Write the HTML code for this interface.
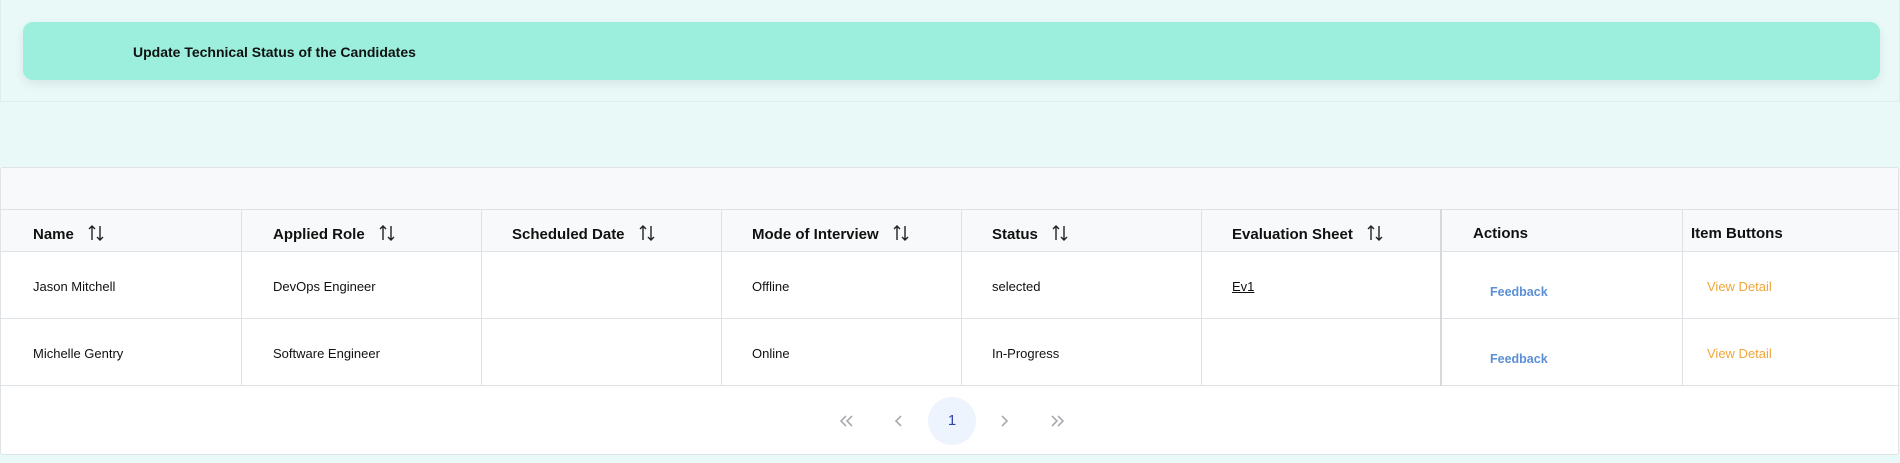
<!DOCTYPE html>
<html><head><style>
*{margin:0;padding:0;box-sizing:border-box}
body{width:1900px;height:463px;background:#e8f9f8;font-family:"Liberation Sans",sans-serif;position:relative;overflow:hidden;color:#111}
.top{position:absolute;left:0;top:0;width:1900px;height:102px;border:1px solid #dcefee;border-top:none;background:#e8f9f8}
.banner{position:absolute;left:22px;top:22px;width:1857px;height:58px;background:#9befdc;border-radius:10px;box-shadow:0 4px 10px rgba(0,0,0,.08)}
.banner span{position:absolute;left:110px;top:22px;font-size:14px;font-weight:bold;color:#111}
.card{position:absolute;left:0;top:167px;width:1899px;height:288px;background:#fff;border:1px solid #dde3e6;border-radius:3px}
.bar{position:absolute;left:0;top:0;width:100%;height:41px;background:#f8f9fa}
.t{position:absolute;font-size:13px;white-space:nowrap}
.h{position:absolute;top:41px;height:43px;background:#f8f9fa;border-top:1px solid #dee2e6;border-bottom:1px solid #dee2e6}
.v{position:absolute;width:1px;background:#dee2e6;top:41px;height:177px}
.hl{position:absolute;left:0;width:100%;height:1px;background:#dee2e6}
.th{position:absolute;top:57px;font-size:15px;font-weight:bold;white-space:nowrap}
.ic{display:inline-block;vertical-align:-2px;margin-left:14px}
</style></head><body>
<div class="top"><div class="banner"><span>Update Technical Status of the Candidates</span></div></div>
<div class="card">
<div class="bar"></div>
<div class="h" style="left:0;width:100%"></div>
<div class="hl" style="top:150px"></div>
<div class="hl" style="top:217px"></div>
<div class="v" style="left:240px"></div>
<div class="v" style="left:480px"></div>
<div class="v" style="left:720px"></div>
<div class="v" style="left:960px"></div>
<div class="v" style="left:1200px"></div>
<div class="v" style="left:1439px;width:2px;background:#d6d9dc"></div>
<div class="v" style="left:1681px"></div>
<div class="th" style="left:32px">Name<svg class="ic" width="16" height="16" viewBox="0 0 16 16" fill="none" stroke="#222" stroke-width="1.4"><path d="M4 15V1M1 4l3-3 3 3M12 1v14M9 12l3 3 3-3"/></svg></div>
<div class="th" style="left:272px">Applied Role<svg class="ic" width="16" height="16" viewBox="0 0 16 16" fill="none" stroke="#222" stroke-width="1.4"><path d="M4 15V1M1 4l3-3 3 3M12 1v14M9 12l3 3 3-3"/></svg></div>
<div class="th" style="left:511px">Scheduled Date<svg class="ic" width="16" height="16" viewBox="0 0 16 16" fill="none" stroke="#222" stroke-width="1.4"><path d="M4 15V1M1 4l3-3 3 3M12 1v14M9 12l3 3 3-3"/></svg></div>
<div class="th" style="left:751px">Mode of Interview<svg class="ic" width="16" height="16" viewBox="0 0 16 16" fill="none" stroke="#222" stroke-width="1.4"><path d="M4 15V1M1 4l3-3 3 3M12 1v14M9 12l3 3 3-3"/></svg></div>
<div class="th" style="left:991px">Status<svg class="ic" width="16" height="16" viewBox="0 0 16 16" fill="none" stroke="#222" stroke-width="1.4"><path d="M4 15V1M1 4l3-3 3 3M12 1v14M9 12l3 3 3-3"/></svg></div>
<div class="th" style="left:1231px">Evaluation Sheet<svg class="ic" width="16" height="16" viewBox="0 0 16 16" fill="none" stroke="#222" stroke-width="1.4"><path d="M4 15V1M1 4l3-3 3 3M12 1v14M9 12l3 3 3-3"/></svg></div>
<div class="th" style="left:1472px">Actions</div>
<div class="th" style="left:1690px">Item Buttons</div>

<div class="t" style="left:32px;top:111px">Jason Mitchell</div>
<div class="t" style="left:272px;top:111px">DevOps Engineer</div>
<div class="t" style="left:751px;top:111px">Offline</div>
<div class="t" style="left:991px;top:111px">selected</div>
<div class="t" style="left:1231px;top:111px;text-decoration:underline">Ev1</div>
<div class="t" style="left:1489px;top:117px;color:#5b8fd6;font-weight:bold;font-size:12.5px">Feedback</div>
<div class="t" style="left:1706px;top:111px;color:#f0a63a">View Detail</div>

<div class="t" style="left:32px;top:178px">Michelle Gentry</div>
<div class="t" style="left:272px;top:178px">Software Engineer</div>
<div class="t" style="left:751px;top:178px">Online</div>
<div class="t" style="left:991px;top:178px">In-Progress</div>
<div class="t" style="left:1489px;top:184px;color:#5b8fd6;font-weight:bold;font-size:12.5px">Feedback</div>
<div class="t" style="left:1706px;top:178px;color:#f0a63a">View Detail</div>

<svg style="position:absolute;left:838px;top:246px" width="16" height="14" viewBox="0 0 16 14" fill="none" stroke="#a8acb0" stroke-width="1.6"><path d="M7 2L2 7l5 5M13 2L8 7l5 5"/></svg>
<svg style="position:absolute;left:893px;top:246px" width="10" height="14" viewBox="0 0 10 14" fill="none" stroke="#a8acb0" stroke-width="1.6"><path d="M7 2L2 7l5 5"/></svg>
<div style="position:absolute;left:927px;top:229px;width:48px;height:48px;border-radius:50%;background:#eef4fe;color:#2f44a8;font-size:15px;text-align:center;line-height:48px">1</div>
<svg style="position:absolute;left:998px;top:246px" width="10" height="14" viewBox="0 0 10 14" fill="none" stroke="#a8acb0" stroke-width="1.6"><path d="M3 2l5 5-5 5"/></svg>
<svg style="position:absolute;left:1048px;top:246px" width="16" height="14" viewBox="0 0 16 14" fill="none" stroke="#a8acb0" stroke-width="1.6"><path d="M3 2l5 5-5 5M9 2l5 5-5 5"/></svg>
</div>
</body></html>
